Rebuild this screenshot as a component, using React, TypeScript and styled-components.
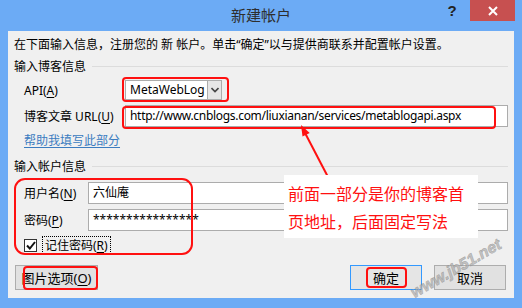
import React from "react";
import styled, { createGlobalStyle } from "styled-components";

const GlobalStyle = createGlobalStyle`
  html, body {
    margin: 0;
    padding: 0;
    width: 522px;
    height: 308px;
    overflow: hidden;
    background: #6cabf5;
  }
`;

const UI_FONT = `"Noto Sans", "Noto Sans CJK SC", sans-serif`;
const RED = "#ff1010";

const Window = styled.div`
  position: relative;
  width: 522px;
  height: 308px;
  overflow: hidden;
  background: #6cabf5;
  display: flex;
  flex-direction: column;
  font-family: ${UI_FONT};
  font-size: 12px;
  color: #000;
`;

const TitleBar = styled.div`
  height: 31px;
  display: grid;
  grid-template-columns: 1fr auto 1fr;
  align-items: start;
`;

const Title = styled.div`
  grid-column: 2;
  margin-top: 5px;
  font-family: "Noto Sans CJK SC", sans-serif;
  font-size: 15px;
  line-height: 20px;
  color: #2e2e2e;
`;

const TitleControls = styled.div`
  grid-column: 3;
  justify-self: end;
  display: flex;
  align-items: flex-start;
  margin-right: 7px;
`;

const HelpButton = styled.div`
  width: 24px;
  height: 21px;
  margin-right: 6px;
  display: flex;
  align-items: center;
  justify-content: center;
  font-family: "Liberation Sans", sans-serif;
  font-weight: bold;
  font-size: 15px;
  color: #222;
`;

const CloseButton = styled.div`
  width: 45px;
  height: 21px;
  background: #c75050;
  display: flex;
  align-items: center;
  justify-content: center;
`;

const Body = styled.div`
  flex: 1;
  margin: 0 8px 10px;
  background: #f0f0f0;
  padding: 4px 6px 0;
  display: flex;
  flex-direction: column;
`;

const Intro = styled.div`
  height: 20px;
  line-height: 20px;
  white-space: nowrap;
`;

const GroupHeader = styled.div<{ $top: number }>`
  display: flex;
  align-items: center;
  height: 20px;
  margin-top: ${({ $top }) => $top}px;
  &::after {
    content: "";
    flex: 1;
    height: 1px;
    background: #dcdcdc;
    margin-left: 6px;
  }
`;

const Row = styled.div<{ $top: number; $label: number }>`
  display: grid;
  grid-template-columns: ${({ $label }) => $label}px 1fr;
  align-items: center;
  margin-top: ${({ $top }) => $top}px;
  padding-left: 10px;
`;

const Label = styled.div`
  white-space: nowrap;
  u {
    text-decoration-thickness: 1px;
    text-underline-offset: 2px;
  }
`;

const Annotated = styled.div`
  position: relative;
  display: flex;
`;

const Highlight = styled.div<{ $inset: string; $radius?: number }>`
  position: absolute;
  inset: ${({ $inset }) => $inset};
  border: 2px solid ${RED};
  border-radius: ${({ $radius }) => $radius ?? 4}px;
  pointer-events: none;
`;

const Select = styled.div`
  width: 97px;
  height: 20px;
  display: flex;
  background: #fff;
  border: 1px solid #acacac;
  box-sizing: border-box;
`;

const SelectValue = styled.div`
  flex: 1;
  padding-left: 4px;
  line-height: 18px;
  font-size: 12px;
`;

const SelectArrow = styled.div`
  width: 13px;
  background: #e6e6e6;
  border-left: 1px solid #acacac;
  display: flex;
  align-items: center;
  justify-content: center;
`;

const TextField = styled.div<{ $tight?: boolean }>`
  flex: 1;
  height: 22px;
  box-sizing: border-box;
  background: #fff;
  border: 1px solid #acacac;
  padding-left: 4px;
  line-height: 20px;
  white-space: nowrap;
  overflow: hidden;
  font-size: 12px;
  letter-spacing: ${({ $tight }) => ($tight ? "-0.3px" : "normal")};
`;

const HelpLink = styled.div`
  margin-top: 4px;
  padding-left: 10px;
  height: 20px;
  line-height: 20px;
  color: #3b7cc0;
  text-decoration: underline;
  text-underline-offset: 2px;
`;

const AccountGroup = styled.div`
  position: relative;
  margin-top: 6px;
  display: flex;
  flex-direction: column;
`;

const CheckRow = styled.div`
  display: flex;
  align-items: center;
  height: 18px;
  margin-top: 5px;
  padding-left: 10px;
`;

const CheckBox = styled.div`
  width: 13px;
  height: 13px;
  box-sizing: border-box;
  border: 1px solid #333;
  background: #fff;
  display: flex;
  align-items: center;
  justify-content: center;
`;

const FocusLabel = styled.div`
  margin-left: 5px;
  padding: 0 2px;
  height: 18px;
  line-height: 17px;
  box-sizing: border-box;
  border: 1px dotted #000;
  u {
    text-underline-offset: 2px;
  }
`;

const ButtonRow = styled.div`
  display: flex;
  align-items: center;
  margin-top: 11px;
  padding: 0 2px 0 1px;
  gap: 12px;
`;

const Spacer = styled.div`
  flex: 1;
`;

const Button = styled.div<{ $width: number; $focused?: boolean }>`
  position: relative;
  width: ${({ $width }) => $width}px;
  height: 25px;
  box-sizing: border-box;
  border: 1px solid ${({ $focused }) => ($focused ? "#3399ff" : "#adadad")};
  background: ${({ $focused }) => ($focused ? "#e5e5e5" : "#e1e1e1")};
  display: flex;
  align-items: center;
  justify-content: center;
  font-size: 13px;
  u {
    text-underline-offset: 2px;
  }
`;

const Note = styled.div`
  position: absolute;
  left: 284px;
  top: 175px;
  width: 194px;
  height: 63px;
  box-sizing: border-box;
  background: #fff;
  padding: 4px 0 0 4px;
  font-family: "Noto Sans CJK SC", sans-serif;
  font-size: 16px;
  line-height: 28px;
  color: ${RED};
`;

const ArrowSvg = styled.svg`
  position: absolute;
  left: 292px;
  top: 122px;
`;

const Watermark = styled.div`
  position: absolute;
  left: 412px;
  top: 286px;
  transform: rotate(-30deg);
  transform-origin: left center;
  font-family: "Liberation Sans", sans-serif;
  font-style: italic;
  font-weight: bold;
  font-size: 16px;
  line-height: 16px;
  color: #b4b4b4;
  -webkit-text-stroke: 0.5px #8a8a8a;
  opacity: 0.75;
  white-space: nowrap;
`;

const App: React.FC = () => (
  <>
    <GlobalStyle />
    <Window>
      <TitleBar>
        <Title>新建帐户</Title>
        <TitleControls>
          <HelpButton>?</HelpButton>
          <CloseButton>
            <svg width="10" height="10" viewBox="0 0 10 10">
              <path d="M1 1 L9 9 M9 1 L1 9" stroke="#fff" strokeWidth="2" />
            </svg>
          </CloseButton>
        </TitleControls>
      </TitleBar>

      <Body>
        <Intro>在下面输入信息，注册您的 新 帐户。单击“确定”以与提供商联系并配置帐户设置。</Intro>

        <GroupHeader $top={1}>输入博客信息</GroupHeader>

        <Row $top={4} $label={101}>
          <Label>
            API(<u>A</u>)
          </Label>
          <Annotated>
            <Select>
              <SelectValue>MetaWebLog</SelectValue>
              <SelectArrow>
                <svg width="8" height="6" viewBox="0 0 8 6">
                  <path d="M0.5 1 L4 4.5 L7.5 1" stroke="#444" strokeWidth="1.6" fill="none" />
                </svg>
              </SelectArrow>
            </Select>
            <Highlight $inset="-3px auto -2px -3px" style={{ width: 103 }} />
          </Annotated>
        </Row>

        <Row $top={5} $label={101}>
          <Label>
            博客文章 URL(<u>U</u>)
          </Label>
          <Annotated>
            <TextField $tight>http://www.cnblogs.com/liuxianan/services/metablogapi.aspx</TextField>
            <Highlight $inset="1px 12px -2px -3px" />
          </Annotated>
        </Row>

        <HelpLink>帮助我填写此部分</HelpLink>

        <GroupHeader $top={5}>输入帐户信息</GroupHeader>

        <AccountGroup>
          <Row $top={0} $label={64}>
            <Label>
              用户名(<u>N</u>)
            </Label>
            <TextField>六仙庵</TextField>
          </Row>
          <Row $top={5} $label={64}>
            <Label>
              密码(<u>P</u>)
            </Label>
            <TextField>****************</TextField>
          </Row>
          <CheckRow>
            <CheckBox>
              <svg width="10" height="9" viewBox="0 0 10 9">
                <path d="M1 4.5 L3.8 7.5 L9 1" stroke="#111" strokeWidth="2" fill="none" />
              </svg>
            </CheckBox>
            <FocusLabel>
              记住密码(<u>R</u>)
            </FocusLabel>
          </CheckRow>
          <Highlight $inset="-4px 315px -1px 0" $radius={11} />
        </AccountGroup>

        <ButtonRow>
          <Button $width={83}>
            图片选项(<u>O</u>)
            <Highlight $inset="0 -1px -1px 7px" />
          </Button>
          <Spacer />
          <Button $width={72} $focused>
            确定
            <Highlight $inset="1px 14px 1px 15px" />
          </Button>
          <Button $width={72}>取消</Button>
        </ButtonRow>
      </Body>

      <ArrowSvg width="42" height="60" viewBox="0 0 42 60">
        <line x1="36" y1="55" x2="12" y2="9" stroke={RED} strokeWidth="2" />
        <polygon points="9,3 17.7,11 10.5,14.6" fill={RED} />
      </ArrowSvg>

      <Note>
        前面一部分是你的博客首
        <br />
        页地址，后面固定写法
      </Note>

      <Watermark>www.jb51.net</Watermark>
    </Window>
  </>
);

export default App;
